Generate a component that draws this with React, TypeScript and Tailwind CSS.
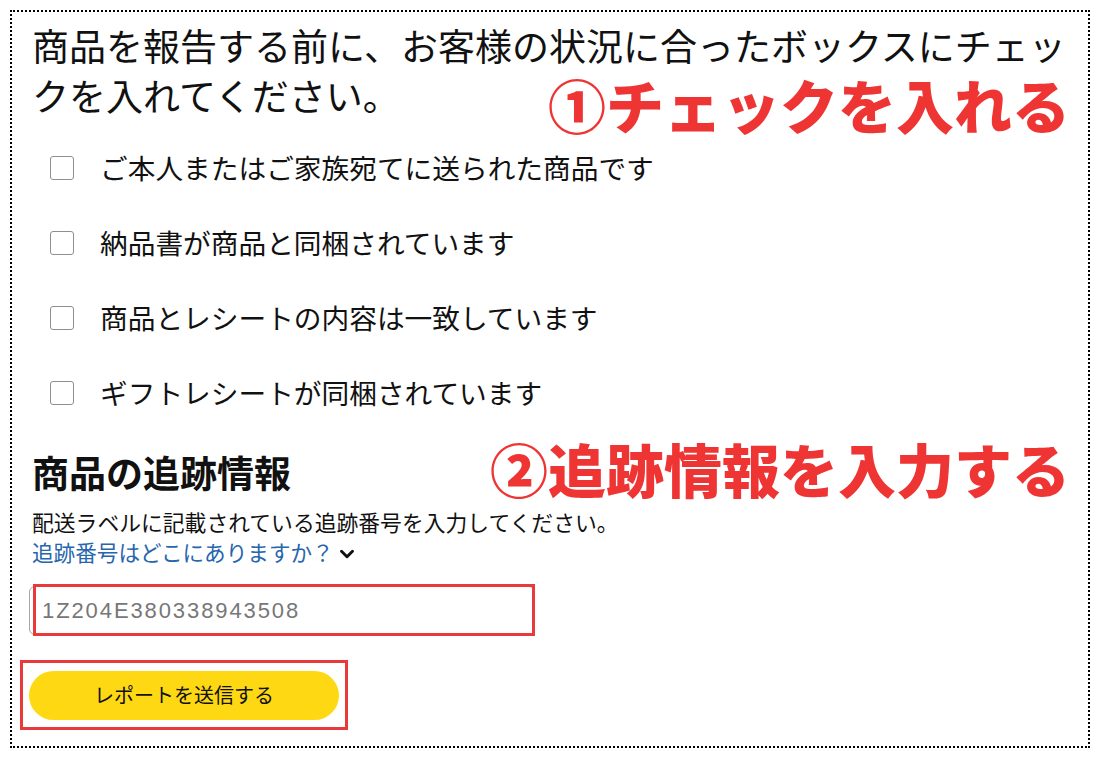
import { ChevronDown } from 'lucide-react';

const items = [
    'ご本人またはご家族宛てに送られた商品です',
    '納品書が商品と同梱されています',
    '商品とレシートの内容は一致しています',
    'ギフトレシートが同梱されています',
];

export default function App() {
    return (
        <div className="w-[1100px] h-[757px] bg-white p-[10px] text-[#111] font-['Noto_Sans_CJK_JP',sans-serif]">
            <div className="relative h-[738px] border-2 border-dotted border-black pl-[20px] pt-[8px]">
                {/* Instructions */}
                <p className="w-[1050px] text-[37px] leading-[50px]">
                    商品を報告する前に、お客様の状況に合ったボックスにチェックを入れてください。
                </p>

                <div className="mt-[10px] pl-[18px]">
                    {items.map((label) => (
                        <label key={label} className="flex items-center h-[75px] gap-[26px]">
                            <span className="w-[24px] h-[24px] rounded-[3px] border-[1.5px] border-[#8f8f8f] bg-white shrink-0" />
                            <span className="text-[27.7px] leading-none">{label}</span>
                        </label>
                    ))}
                </div>

                {/* Tracking */}
                <h2 className="mt-[20px] text-[37px] leading-[44px] font-bold">商品の追跡情報</h2>
                <p className="mt-[13px] text-[21.8px] leading-[30px]">配送ラベルに記載されている追跡番号を入力してください。</p>
                <div className="flex items-center gap-[6px] text-[21.6px] leading-[29px] text-[#2766ad]">
                    <span>追跡番号はどこにありますか？</span>
                    <ChevronDown size={22} strokeWidth={3.2} className="text-[#111] mt-[4px] -ml-[4px]" />
                </div>

                <div className="relative mt-[20px] -ml-[3px] w-[506px] h-[49px]">
                    <input
                        readOnly
                        placeholder="1Z204E380338943508"
                        className="w-full h-full rounded-[6px] border border-[#a6a6a6] px-[12px] text-[22px] tracking-[1.9px] text-[#777] placeholder:text-[#777] font-['Liberation_Sans',sans-serif] outline-none"
                    />
                    <div className="absolute top-[-2px] left-[4px] right-0 bottom-[-1px] border-[3px] border-[#e83a3a] pointer-events-none" />
                </div>

                <div className="mt-[25px] -ml-[12px] w-[328px] h-[70px] border-[3px] border-[#e83a3a] flex items-center justify-center">
                    <button className="w-[310px] h-[49px] rounded-full bg-[#ffd814] text-[20px] text-[#111]">
                        レポートを送信する
                    </button>
                </div>

                {/* Annotations */}
                <div className="absolute left-[536px] top-[63px] text-[58px] leading-none font-black text-[#ef3434] whitespace-nowrap">
                    ①チェックを入れる
                </div>
                <div className="absolute left-[478px] top-[427px] text-[58px] leading-none font-black text-[#ef3434] whitespace-nowrap">
                    ②追跡情報を入力する
                </div>
            </div>
        </div>
    );
}
